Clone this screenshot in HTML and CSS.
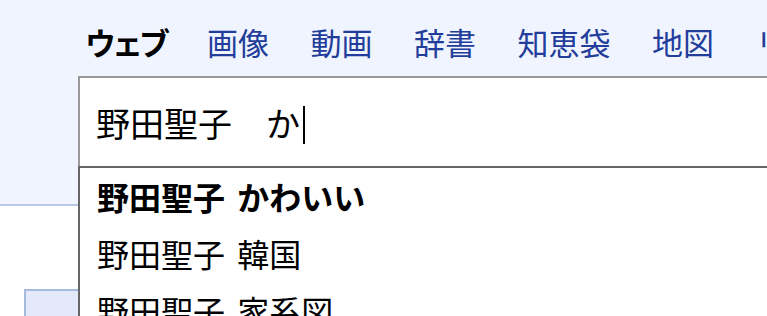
FILE: index.html
```html
<!DOCTYPE html>
<html lang="ja">
<head>
<meta charset="utf-8">
<link rel="stylesheet" href="styles.css">
</head>
<body>
<div class="page">
  <header class="header">
    <nav class="tabs">
      <span class="tab current">ウェブ</span>
      <a class="tab" href="#">画像</a>
      <a class="tab" href="#">動画</a>
      <a class="tab" href="#">辞書</a>
      <a class="tab" href="#">知恵袋</a>
      <a class="tab" href="#">地図</a>
      <a class="tab" href="#">リアルタイム</a>
    </nav>
    <div class="search">
      <div class="field"><span class="query">野田聖子　か</span><span class="caret"></span></div>
      <ul class="suggest">
        <li class="item strong">野田聖子 かわいい</li>
        <li class="item">野田聖子 韓国</li>
        <li class="item">野田聖子 家系図</li>
      </ul>
    </div>
  </header>
  <main class="content">
    <div class="box"></div>
  </main>
</div>
</body>
</html>
```
FILE: styles.css
```css
html, body {
  margin: 0;
  padding: 0;
  background: #ffffff;
  overflow: hidden;
}
body {
  font-family: "Noto Sans CJK JP", "Noto Sans", sans-serif;
  width: 767px;
  height: 316px;
}
.page {
  width: 767px;
  height: 316px;
  overflow: hidden;
}
.header {
  background: #eff4fe;
  border-bottom: 2px solid #b9c8e6;
  box-sizing: border-box;
  padding-left: 78px;
  height: 206px;
}
.tabs {
  display: flex;
  white-space: nowrap;
  overflow: hidden;
  padding: 26px 0 0 7px;
  height: 76px;
  box-sizing: border-box;
  font-size: 31px;
  line-height: 31px;
}
.tab {
  color: #233d9b;
  text-decoration: none;
  margin-right: 41.5px;
  flex: none;
}
.tab.current {
  color: #000;
  font-weight: bold;
  letter-spacing: -4px;
  margin-right: 41px;
}
.search {
  position: relative;
  width: 760px;
}
.field {
  height: 90px;
  box-sizing: border-box;
  background: #fff;
  border-top: 2px solid #999;
  border-left: 2px solid #999;
  padding: 27px 0 0 16px;
  font-size: 34px;
  line-height: 35px;
  color: #000;
  display: flex;
  align-items: flex-start;
}
.caret {
  display: inline-block;
  width: 2px;
  height: 38px;
  background: #000;
  margin-left: 3px;
  margin-top: 1px;
}
.suggest {
  position: absolute;
  left: 0;
  top: 90px;
  width: 100%;
  height: 200px;
  margin: 0;
  padding: 0;
  list-style: none;
  background: #fff;
  border-top: 2px solid #666;
  border-left: 2px solid #666;
  z-index: 2;
}
.item {
  height: 57px;
  line-height: 57px;
  padding-left: 17px;
  font-size: 32px;
  word-spacing: 5px;
  color: #000;
}
.item.strong {
  font-weight: bold;
}
.content {
  padding: 83px 0 0 24px;
}
.box {
  width: 54px;
  height: 40px;
  background: #e3e9fb;
  border-top: 2px solid #a6b9df;
  border-left: 2px solid #a6b9df;
}
```
